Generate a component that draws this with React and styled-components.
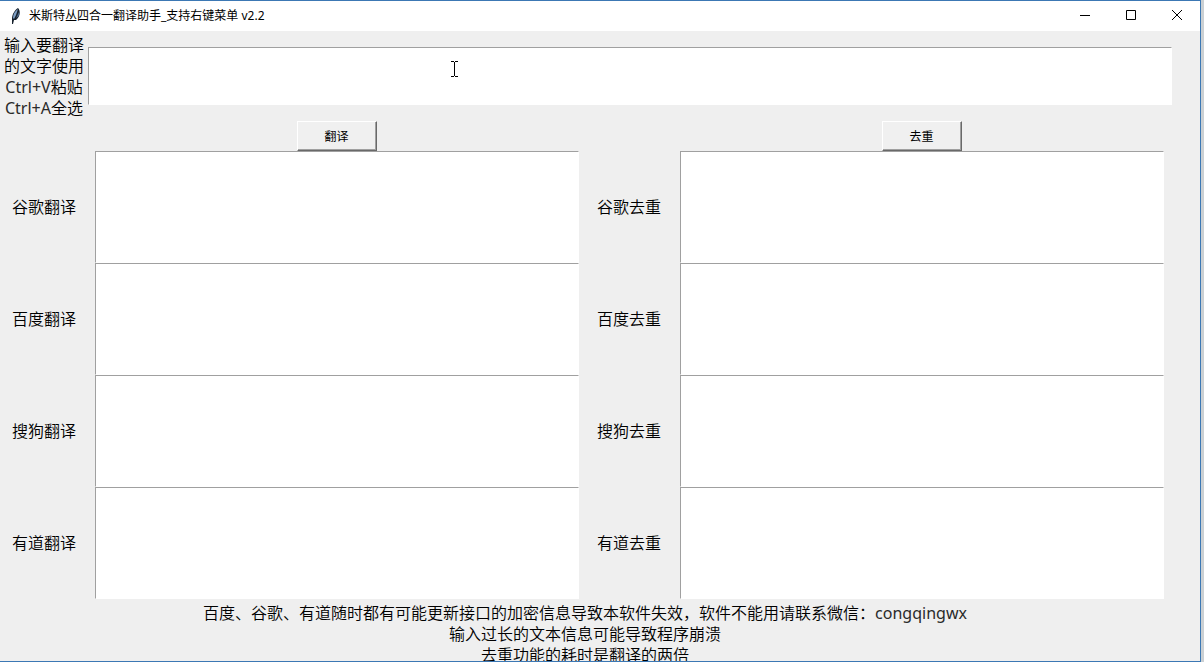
import { useState } from "react";
import styled, { createGlobalStyle } from "styled-components";

const fontes = ["谷歌", "百度", "搜狗", "有道"];

export default function App() {
  const [texto, setTexto] = useState("");

  return (
    <Desktop>
      <GlobalStyle />
      <Window>
        <TitleBar>
          <Feather viewBox="0 0 16 18">
            <path d="M4 17 L4 12 C4 7 7 3 10 1 C13 4 12 10 8 13 L6 13 L5 17 Z" fill="#16202c" />
            <path d="M5 11 C5 7 7 4 10 2 L8 8 L6 12 Z" fill="#7f9fc4" />
            <path d="M8 11 L11 5 C12 8 10 10 8 11 Z" fill="#4d6a8c" />
          </Feather>
          <h1>米斯特丛四合一翻译助手_支持右键菜单 v2.2</h1>
          <WindowButton aria-label="最小化">
            <svg viewBox="0 0 10 10">
              <path d="M0 5.5H10" />
            </svg>
          </WindowButton>
          <WindowButton aria-label="最大化">
            <svg viewBox="0 0 10 10">
              <path d="M0.5 0.5H9.5V9.5H0.5Z" />
            </svg>
          </WindowButton>
          <WindowButton aria-label="关闭">
            <svg viewBox="0 0 10 10">
              <path d="M0 0L10 10M10 0L0 10" />
            </svg>
          </WindowButton>
        </TitleBar>

        <InputRow>
          <Label htmlFor="entrada">
            输入要翻译
            <br />
            的文字使用
            <br />
            <Latin>Ctrl+V</Latin>粘贴
            <br />
            <Latin>Ctrl+A</Latin>全选
          </Label>
          <InputArea>
            <TextBox
              id="entrada"
              $height={58}
              value={texto}
              onChange={(e) => setTexto(e.target.value)}
            />
            <Caret viewBox="0 0 7 16">
              <path d="M0 0.5H3M4 0.5H7M3.5 1V15M0 15.5H3M4 15.5H7" />
            </Caret>
          </InputArea>
        </InputRow>

        <Columns>
          <Column acao="翻译" />
          <Column acao="去重" />
        </Columns>

        <Footer>
          <p>
            百度、谷歌、有道随时都有可能更新接口的加密信息导致本软件失效，软件不能用请联系微信：<Latin>congqingwx</Latin>
          </p>
          <p>输入过长的文本信息可能导致程序崩溃</p>
          <p>去重功能的耗时是翻译的两倍</p>
        </Footer>
      </Window>
    </Desktop>
  );
}

function Column({ acao }) {
  return (
    <ColumnContainer>
      <ActionCell>
        <ActionButton>{acao}</ActionButton>
      </ActionCell>
      {fontes.map((fonte) => (
        <ResultRow key={fonte}>
          <Label htmlFor={fonte + acao}>
            {fonte}
            {acao}
          </Label>
          <ResultCell>
            <TextBox id={fonte + acao} $height={112} />
          </ResultCell>
        </ResultRow>
      ))}
    </ColumnContainer>
  );
}

const GlobalStyle = createGlobalStyle`
  * {
    box-sizing: border-box;
    margin: 0;
    padding: 0;
  }

  body {
    overflow: hidden;
    color: #000;
    font-family: "Noto Sans", "Noto Sans CJK SC", sans-serif;
    font-size: 16px;
    font-weight: 350;
  }

  button,
  textarea {
    font-family: inherit;
    font-weight: inherit;
  }
`;

const Desktop = styled.div`
  height: 100vh;
  padding-right: 3px;
  background-color: #cbd0d3;
`;

const Window = styled.main`
  height: 100%;
  overflow: hidden;
  background-color: #efefef;
  border: 1px solid #3c78b4;
  border-left: none;
`;

const TitleBar = styled.header`
  height: 30px;
  display: flex;
  align-items: center;
  padding-left: 8px;
  background-color: #fff;

  h1 {
    flex: 1;
    margin-left: 5px;
    font-size: 12px;
    font-weight: 400;
    line-height: 18px;
  }
`;

const Feather = styled.svg`
  width: 16px;
  height: 18px;
`;

const WindowButton = styled.button`
  width: 46px;
  height: 28px;
  align-self: flex-start;
  border: none;
  background: none;

  svg {
    width: 10px;
    height: 10px;
    display: block;
    margin: 0 auto;
    overflow: visible;
    fill: none;
    stroke: #000;
  }
`;

const InputRow = styled.section`
  height: 90px;
  display: flex;
  align-items: center;
  padding-right: 28px;
`;

const Label = styled.label`
  width: 88px;
  flex-shrink: 0;
  padding-top: 1px;
  text-align: center;
  line-height: 21px;
  white-space: nowrap;
`;

const Latin = styled.span`
  color: #2a2a2a;
  font-weight: 400;
`;

const InputArea = styled.div`
  flex: 1;
  position: relative;
`;

const TextBox = styled.textarea`
  width: 100%;
  height: ${(props) => props.$height}px;
  display: block;
  padding: 4px;
  border: 1px solid #a0a0a0;
  border-right-color: #fff;
  border-bottom-color: #fff;
  outline: none;
  resize: none;
  background-color: #fff;
  font-size: 16px;
  line-height: 21px;
`;

const Caret = styled.svg`
  width: 7px;
  height: 16px;
  position: absolute;
  top: 14px;
  left: 363px;
  fill: none;
  stroke: #000;
  pointer-events: none;
`;

const Columns = styled.section`
  display: grid;
  grid-template-columns: 1fr 1fr;
  padding-right: 30px;
`;

const ColumnContainer = styled.div`
  min-width: 0;
`;

const ActionCell = styled.div`
  display: flex;
  justify-content: center;
  padding-left: 88px;
`;

const ActionButton = styled.button`
  width: 80px;
  height: 30px;
  border: 1px solid #fff;
  border-right-color: #696969;
  border-bottom-color: #696969;
  box-shadow: inset -1px -1px #a0a0a0;
  background-color: #f0f0f0;
  color: #000;
  font-size: 12px;
  font-weight: 400;
`;

const ResultRow = styled.div`
  display: flex;
  align-items: center;
`;

const ResultCell = styled.div`
  flex: 1;
  padding: 0 6px 0 7px;
`;

const Footer = styled.footer`
  padding: 4px 30px 0 0;
  text-align: center;
  line-height: 21px;
`;
